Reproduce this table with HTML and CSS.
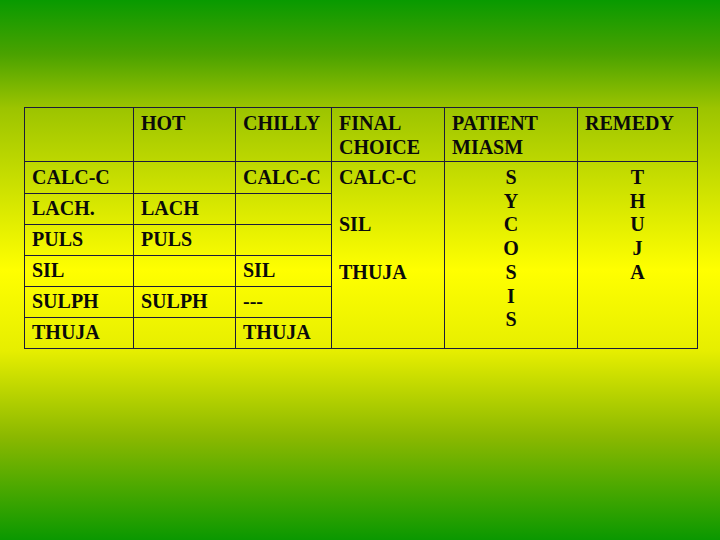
FILE: index.html
```html
<!DOCTYPE html>
<html>
<head>
<meta charset="utf-8">
<link rel="stylesheet" href="styles.css">
</head>
<body>
<div class="slide">
  <table class="grid">
    <colgroup>
      <col class="c1"><col class="c2"><col class="c3"><col class="c4"><col class="c5"><col class="c6">
    </colgroup>
    <tr class="head">
      <td></td>
      <td>HOT</td>
      <td>CHILLY</td>
      <td>FINAL<br>CHOICE</td>
      <td>PATIENT<br>MIASM</td>
      <td>REMEDY</td>
    </tr>
    <tr class="first">
      <td>CALC-C</td>
      <td></td>
      <td>CALC-C</td>
      <td rowspan="6" class="span">CALC-C<br><br>SIL<br><br>THUJA</td>
      <td rowspan="6" class="span center">S<br>Y<br>C<br>O<br>S<br>I<br>S</td>
      <td rowspan="6" class="span center">T<br>H<br>U<br>J<br>A</td>
    </tr>
    <tr class="row"><td>LACH.</td><td>LACH</td><td></td></tr>
    <tr class="row"><td>PULS</td><td>PULS</td><td></td></tr>
    <tr class="row"><td>SIL</td><td></td><td>SIL</td></tr>
    <tr class="row"><td>SULPH</td><td>SULPH</td><td>---</td></tr>
    <tr class="row"><td>THUJA</td><td></td><td>THUJA</td></tr>
  </table>
</div>
</body>
</html>
```

FILE: styles.css
```css
html, body {
  margin: 0;
  padding: 0;
  width: 720px;
  height: 540px;
  overflow: hidden;
}

body {
  background: linear-gradient(to bottom,
    #089a00 0%,
    #4aa200 10%,
    #9cc400 20%,
    #ffff00 50%,
    #e6ee00 65%,
    #8ab800 81%,
    #0a9800 100%);
  font-family: "Liberation Serif", "Times New Roman", serif;
  font-weight: bold;
  font-size: 20px;
  color: #0a0a0a;
}

.slide {
  padding: 107px 0 0 24px;
}

.grid {
  border-collapse: collapse;
  table-layout: fixed;
  width: 673px;
}

.c1 { width: 109px; }
.c2 { width: 102px; }
.c3 { width: 96px; }
.c4 { width: 113px; }
.c5 { width: 133px; }
.c6 { width: 120px; }

.grid td {
  border: 1.5px solid #1c1c3a;
  padding: 0 0 0 7px;
  line-height: 23.7px;
  vertical-align: middle;
  white-space: nowrap;
}

.head { height: 54px; }
.head td {
  vertical-align: top;
  padding-top: 4px;
}

.first { height: 32px; }
.row { height: 31px; }

.grid td.span {
  vertical-align: top;
  padding-top: 4px;
}

.grid td.center {
  text-align: center;
  padding-left: 0;
}
```
